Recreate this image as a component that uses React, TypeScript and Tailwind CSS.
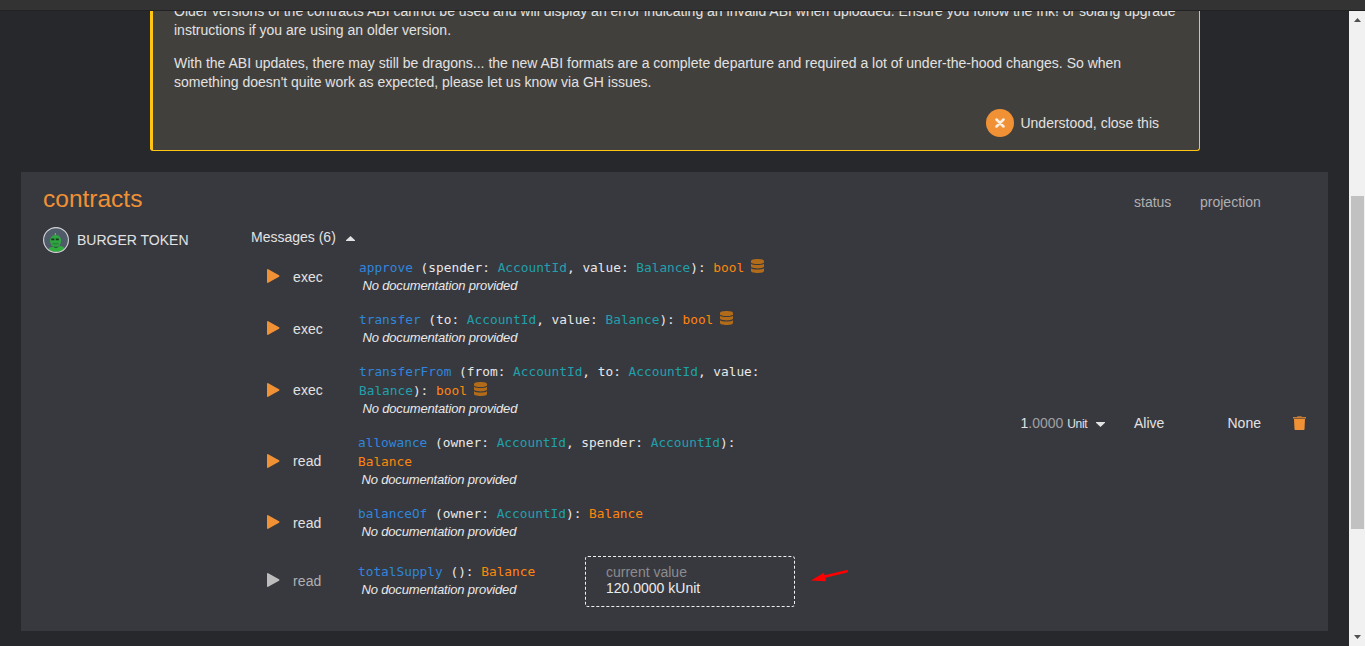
import React from 'react';

type Arg = { name: string; type: string };

type Message = {
  name: string;
  args: Arg[];
  returns: string;
  mutates?: boolean;
  action: 'exec' | 'read';
  twoLines?: boolean;
  disabled?: boolean;
  value?: string;
};

const messages: Message[] = [
  { name: 'approve', args: [{ name: 'spender', type: 'AccountId' }, { name: 'value', type: 'Balance' }], returns: 'bool', mutates: true, action: 'exec' },
  { name: 'transfer', args: [{ name: 'to', type: 'AccountId' }, { name: 'value', type: 'Balance' }], returns: 'bool', mutates: true, action: 'exec' },
  { name: 'transferFrom', args: [{ name: 'from', type: 'AccountId' }, { name: 'to', type: 'AccountId' }, { name: 'value', type: 'Balance' }], returns: 'bool', mutates: true, action: 'exec', twoLines: true },
  { name: 'allowance', args: [{ name: 'owner', type: 'AccountId' }, { name: 'spender', type: 'AccountId' }], returns: 'Balance', action: 'read', twoLines: true },
  { name: 'balanceOf', args: [{ name: 'owner', type: 'AccountId' }], returns: 'Balance', action: 'read' },
  { name: 'totalSupply', args: [], returns: 'Balance', action: 'read', disabled: true, value: '120.0000 kUnit' },
];

function Play({ className }: { className: string }) {
  return (
    <svg className={`h-[14px] w-[13px] shrink-0 ${className}`} viewBox="0 0 13 14" fill="currentColor">
      <path d="M0 .8C0 .2.600-.1 1.200.2L12 6.300c.6.4.6 1 0 1.400L1.200 13.800C.6 14.100 0 13.800 0 13.200z" />
    </svg>
  );
}

function Database() {
  return (
    <svg className="relative -top-px ml-[7px] inline-block h-[14px] w-[13px] align-[-2px] text-[#b16b19]" viewBox="0 0 13 14" fill="currentColor">
      <path d="M0 2C0 .8 2.800 0 6.500 0S13 .8 13 2v1.200C13 4.300 10.200 5.100 6.500 5.100S0 4.300 0 3.200z" />
      <path d="M0 4.800c1.400 1 3.800 1.300 6.500 1.300s5.100-.3 6.500-1.300v2.800c0 1.100-2.800 1.900-6.500 1.900S0 8.700 0 7.600z" />
      <path d="M0 9.200c1.400 1 3.800 1.300 6.500 1.300s5.100-.3 6.500-1.300V12c0 1.200-2.800 2-6.500 2S0 13.200 0 12z" />
    </svg>
  );
}

function Avatar() {
  return (
    <svg className="h-[26px] w-[26px]" viewBox="0 0 26 26">
      <circle cx="13" cy="13" r="12.400" fill="#505b69" />
      <path d="M5.500 22.500c.5-2 2.500-2.500 4.500-2.500l3 1 4-2c2 0 4 1 4.500 2.500-4 4-12 4.500-16 1z" fill="#2fae3d" />
      <path d="M11.800 6h1.200v3h-1.200z" fill="#8b9a8d" />
      <ellipse cx="12.600" cy="14" rx="5.600" ry="6.200" fill="#31a342" />
      <path d="M8.300 11.500h3v1.800h-3zM12.800 11.500h3v1.800h-3z" fill="#12371b" />
      <path d="M9.500 16.300h6v1h-6z" fill="#1f7a2e" />
      <path d="M10.500 19.700h5l-2.500 1.500z" fill="#1d5c29" />
      <circle cx="13" cy="13" r="12.400" fill="none" stroke="#d5d5d8" strokeWidth="1.100" />
    </svg>
  );
}

function Signature({ message }: { message: Message }) {
  return (
    <div className="font-['DejaVu_Sans_Mono',monospace] text-[12.8px] leading-[19px] tracking-[-0.003px] text-[#e8e8e8]">
      <span className="text-[#2f86dc]">{message.name}</span> (
      {message.args.map((arg, i) => (
        <React.Fragment key={arg.name}>
          {i > 0 && ', '}
          {arg.name}: <span className="text-[#21a0ab]">{arg.type}</span>
        </React.Fragment>
      ))}
      ): <span className="text-[#ff860d]">{message.returns}</span>
      {message.mutates && <Database />}
    </div>
  );
}

function MessageRow({ message }: { message: Message }) {
  const exec = message.action === 'exec';
  return (
    <div className={`flex items-center ${message.value ? 'h-[62px]' : 'pt-[7px] pb-[8px]'}`}>
      <div className={`flex shrink-0 items-center pl-4 ${message.twoLines ? 'pb-px' : ''} ${exec ? 'w-[108px]' : 'w-[107px]'}`}>
        <Play className={`${message.twoLines || message.value ? '' : 'mb-[2px]'} ${message.disabled ? 'text-[#bdbdbe]' : 'text-[#f19135]'}`} />
        <span className={`ml-[13px] tracking-[0.1px] ${message.twoLines ? 'relative top-px' : 'mt-[2px]'} ${message.disabled ? 'text-[#b0b0b1]' : ''}`}>{message.action}</span>
      </div>
      <div className={message.value ? 'w-[227px]' : 'w-[412px]'}>
        <Signature message={message} />
        <div className="pl-[3.500px] text-[13px] leading-[18px] tracking-[-0.17px] text-[#e8e8e8] italic">No documentation provided</div>
      </div>
      {message.value && (
        <>
          <div className="mt-[3px] h-[51px] w-[210px] rounded-[3px] border border-dashed border-[#f0f0f0] pt-[7px] pl-5 leading-4">
            <div className="text-[#8c8c8f]">current value</div>
            <div className="text-[#ececec]">{message.value}</div>
          </div>
          <svg className="-mt-[8px] ml-[15px] h-[14px] w-[40px]" viewBox="0 0 40 14">
            <path d="M.8 11.500L14 3.800l.5 2.400L36.700 1c1.600-.2 2 2 .5 2.600L15.500 8.800l.6 3.500z" fill="#fe0000" />
          </svg>
        </>
      )}
    </div>
  );
}

export default function App() {
  return (
    <div className="flex h-[646px] w-[1365px] flex-col overflow-hidden bg-[#27282c] font-['Liberation_Sans',Arial,sans-serif] text-[14px] text-[#e2e2e2]">
      <div className="h-[11px] shrink-0 border-b border-[#222224] bg-[#333333]" />
      <div className="flex h-[635px] overflow-hidden">
        <main className="w-[1349px]">
          <section className="-mt-[10px] ml-[150px] flex h-[150px] w-[1050px] flex-col rounded-b-[3px] border-r border-b border-l-[3px] border-[#ffc414] bg-[#42403c]">
            <div className="mt-px pl-[21px] leading-[19px] whitespace-nowrap">
              <p>Older versions of the contracts ABI cannot be used and will display an error indicating an invalid ABI when uploaded. Ensure you follow the Ink! or solang upgrade</p>
              <p>instructions if you are using an older version.</p>
              <p className="mt-[14px]">With the ABI updates, there may still be dragons... the new ABI formats are a complete departure and required a lot of under-the-hood changes. So when</p>
              <p>something doesn't quite work as expected, please let us know via GH issues.</p>
            </div>
            <button className="mt-[17px] mr-[40px] flex items-center gap-[6px] self-end">
              <span className="flex h-[28px] w-[28px] items-center justify-center rounded-full bg-[#f19135]">
                <svg className="h-[10px] w-[10px]" viewBox="0 0 10 10" stroke="#fbeee0" strokeWidth="2.500" strokeLinecap="round">
                  <path d="M1.500 1.500l7 7M8.500 1.500l-7 7" />
                </svg>
              </span>
              Understood, close this
            </button>
          </section>

          <section className="mt-[21px] ml-[21px] flex h-[459px] w-[1307px] flex-col bg-[#38393f]">
            <header className="flex h-[53px] shrink-0 items-center">
              <h1 className="w-[1113px] pl-[22px] text-[24.500px] leading-[28px] text-[#f19135]">contracts</h1>
              <span className="mt-[7px] w-[66px] text-[#b0b0b1]">status</span>
              <span className="mt-[7px] text-[#b0b0b1]">projection</span>
            </header>
            <div className="flex h-[406px]">
              <div className="flex w-[230px] items-center gap-2 self-start pt-[2px] pl-[22px]">
                <Avatar />
                <span>BURGER TOKEN</span>
              </div>
              <div className="w-[748px]">
                <div className="flex h-[26px] items-center gap-[10px] pb-[2px]">
                  <span>Messages (6)</span>
                  <svg className="mt-[3px] h-[5px] w-[9px]" viewBox="0 0 9 5" fill="#e2e2e2"><path d="M0 5V4.200L4.500 0 9 4.200V5z" /></svg>
                </div>
                <div>
                  {messages.map((message) => <MessageRow key={message.name} message={message} />)}
                </div>
              </div>
              <div className="flex h-[396px] flex-1 items-center">
                <div className="flex w-[135px] items-center pl-[21.500px]">
                  <span>1<span className="text-[#a0a0a2]">.0000</span> <span className="text-[12px] tracking-[-0.3px]">Unit</span></span>
                  <svg className="mt-[3px] ml-[9px] h-[5px] w-[9px]" viewBox="0 0 9 5" fill="#e2e2e2"><path d="M0 0h9v.8L4.500 5 0 .8z" /></svg>
                </div>
                <span className="w-[93.500px]">Alive</span>
                <span className="w-[65.500px]">None</span>
                <svg className="h-[14px] w-[13px]" viewBox="0 0 13 14">
                  <path d="M0 1h4L4.600.2h3.800L9 1h4v1.500H0z" fill="#c97c32" />
                  <path d="M1 3h11l-.5 10c0 .6-.4 1-1 1h-8c-.6 0-1-.4-1-1z" fill="#f19135" />
                </svg>
              </div>
            </div>
          </section>
        </main>
        <div className="flex w-4 flex-col items-center bg-[#f1f1f1]">
          <svg className="mt-[7px] h-[4px] w-[7px]" viewBox="0 0 7 4" fill="#505050"><path d="M0 4L3.500 0 7 4z" /></svg>
          <div className="mt-[174px] ml-px h-[333px] w-[13px] bg-[#c1c1c1]" />
          <svg className="mt-auto mb-[7px] h-[4px] w-[7px]" viewBox="0 0 7 4" fill="#505050"><path d="M0 0h7L3.500 4z" /></svg>
        </div>
      </div>
    </div>
  );
}
